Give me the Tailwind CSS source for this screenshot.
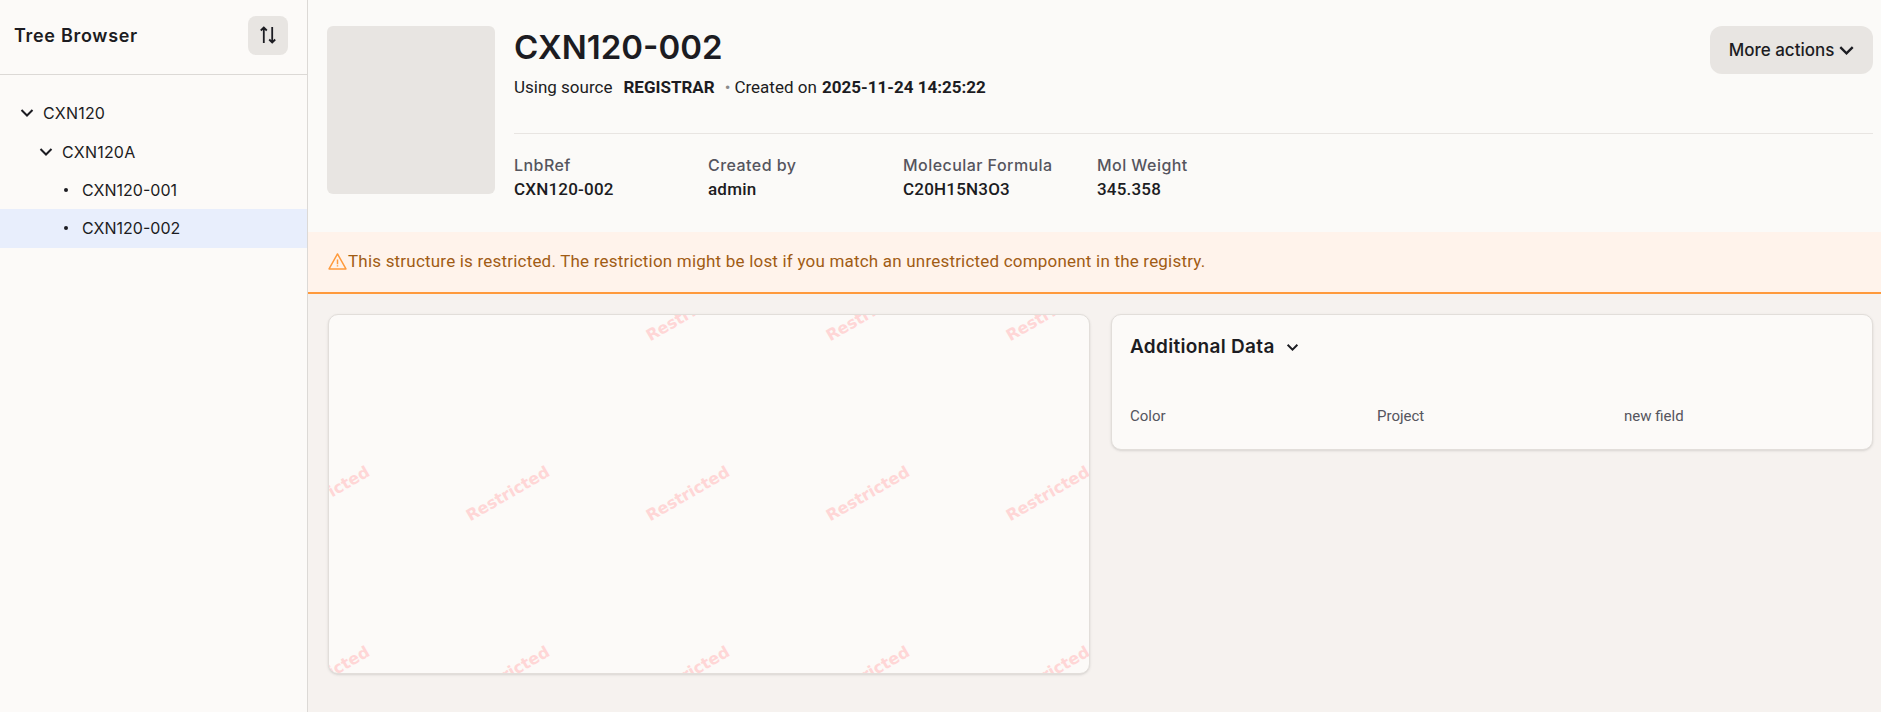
<!doctype html>
<html lang="en">
<head>
<meta charset="utf-8">
<title>CXN120-002</title>
<script src="https://cdn.jsdelivr.net/npm/@tailwindcss/browser@4"></script>
</head>
<body class="h-[712px] overflow-hidden bg-[#f6f2ef] font-['Roboto',sans-serif] text-[#1c1c22]">
<div class="flex h-[712px]">
  <aside class="flex w-[308px] shrink-0 flex-col border-r border-[#dcd9d6] bg-[#fcfaf8]">
    <div class="flex h-[75px] items-center justify-between border-b border-[#dcd9d6] pb-[4px] pl-[14px] pr-[19px]">
      <h2 class="font-['Inter',sans-serif] text-[18px] font-semibold tracking-[0.7px]">Tree Browser</h2>
      <button class="flex h-[39px] w-[40px] items-center justify-center rounded-lg bg-[#e8e5e2]">
        <svg class="h-[20px] w-[20px]" viewBox="0 0 20 20" fill="none" stroke="#1c1c22" stroke-width="1.8"><path d="M5.800 18V2.500M2.800 5.500l3-3 3 3M14.200 2v15.500M11.200 14.500l3 3 3-3"/></svg>
      </button>
    </div>
    <ul class="pt-[18px] font-['Inter',sans-serif] text-[16px]">
      <li class="flex h-[39px] items-center gap-[9px] pl-[20px]">
        <svg class="h-[14px] w-[14px]" viewBox="0 0 14 14" fill="none" stroke="#1c1c22" stroke-width="2"><path d="M1.500 4 7 9.500 12.500 4"/></svg>
        <span class="tracking-[0.2px]">CXN120</span>
      </li>
      <li class="flex h-[39px] items-center gap-[9px] pl-[39px]">
        <svg class="h-[14px] w-[14px]" viewBox="0 0 14 14" fill="none" stroke="#1c1c22" stroke-width="2"><path d="M1.500 4 7 9.500 12.500 4"/></svg>
        <span class="tracking-[0.2px]">CXN120A</span>
      </li>
      <li class="flex h-[38px] items-center gap-[14px] pl-[64px]">
        <span class="h-[4px] w-[4px] rounded-full bg-[#1c1c22]"></span>
        <span>CXN120-001</span>
      </li>
      <li class="flex h-[39px] items-center gap-[14px] bg-[#e8eefc] pb-[1px] pl-[64px]">
        <span class="h-[4px] w-[4px] rounded-full bg-[#1c1c22]"></span>
        <span>CXN120-002</span>
      </li>
    </ul>
  </aside>
  <main class="min-w-0 flex-1">
    <header class="flex h-[232px] gap-[19px] bg-[#fbfaf8] pl-[19px] pr-[8px] pt-[26px]">
      <div class="h-[168px] w-[168px] shrink-0 rounded-md bg-[#e8e5e2]"></div>
      <div class="min-w-0 flex-1">
        <div class="flex h-[108px] items-start justify-between border-b border-[#e8e5e2]">
          <div>
            <h1 class="font-['Inter',sans-serif] text-[33px] font-semibold leading-[42px]">CXN120-002</h1>
            <p class="mt-[7px] flex items-center text-[17px] leading-[24px]">
              <span>Using source</span>
              <b class="ml-[11px] font-bold">REGISTRAR</b>
              <span class="ml-[10px] mr-[4px] text-[#8a8a8a]">•</span>
              <span>Created on <b class="ml-[1px] font-bold">2025-11-24 14:25:22</b></span>
            </p>
          </div>
          <button class="flex h-[48px] w-[163px] items-center justify-center gap-[5px] rounded-xl bg-[#e8e5e2] pt-[1px] font-['Inter',sans-serif] text-[17px] font-medium">
            More actions
            <svg class="h-[15px] w-[15px]" viewBox="0 0 14 14" fill="none" stroke="#1c1c22" stroke-width="2.200"><path d="M1.200 3.800 7 9.600l5.800-5.800"/></svg>
          </button>
        </div>
        <dl class="mt-[19px] flex leading-[24px]">
          <div class="w-[194px]"><dt class="font-['Inter',sans-serif] text-[16px] font-medium tracking-[0.45px] text-[#55555e]">LnbRef</dt><dd class="text-[17px] font-medium tracking-[0.2px]">CXN120-002</dd></div>
          <div class="w-[195px]"><dt class="font-['Inter',sans-serif] text-[16px] font-medium tracking-[0.45px] text-[#55555e]">Created by</dt><dd class="text-[17px] font-medium tracking-[0.2px]">admin</dd></div>
          <div class="w-[194px]"><dt class="font-['Inter',sans-serif] text-[16px] font-medium tracking-[0.45px] text-[#55555e]">Molecular Formula</dt><dd class="text-[17px] font-medium tracking-[0.2px]">C20H15N3O3</dd></div>
          <div><dt class="font-['Inter',sans-serif] text-[16px] font-medium tracking-[0.45px] text-[#55555e]">Mol Weight</dt><dd class="text-[17px] font-medium tracking-[0.2px]">345.358</dd></div>
        </dl>
      </div>
    </header>
    <div class="flex h-[62px] items-center gap-[1px] border-b-2 border-[#ff9a3c] bg-[#fff3eb] pl-[20px] text-[17px] tracking-[0.2px] text-[#a15c14]">
      <svg class="-mt-[2px] h-[19px] w-[19px] shrink-0" viewBox="0 0 18 18" fill="none" stroke="#ff9a3c" stroke-width="1.400"><path d="M9 1.800 1 16h16z" stroke-linejoin="round"/><path d="M9 7v4.500M9 12.600v1.200"/></svg>
      <span>This structure is restricted. The restriction might be lost if you match an unrestricted component in the registry.</span>
    </div>
    <section class="flex gap-[21px] pl-[20px] pr-[8px] pt-[20px]">
      <div class="relative h-[360px] w-[762px] overflow-hidden rounded-[10px] border border-[#e2deda] bg-[#fcfaf8] shadow-sm">
        <span class="absolute left-[304px] top-[-10px] w-[110px] -rotate-30 text-center font-['DejaVu_Sans',sans-serif] text-[16px] font-bold leading-[18px] text-[#ffd6d6]">Restricted</span>
        <span class="absolute left-[484px] top-[-10px] w-[110px] -rotate-30 text-center font-['DejaVu_Sans',sans-serif] text-[16px] font-bold leading-[18px] text-[#ffd6d6]">Restricted</span>
        <span class="absolute left-[664px] top-[-10px] w-[110px] -rotate-30 text-center font-['DejaVu_Sans',sans-serif] text-[16px] font-bold leading-[18px] text-[#ffd6d6]">Restricted</span>
        <span class="absolute left-[-56px] top-[170px] w-[110px] -rotate-30 text-center font-['DejaVu_Sans',sans-serif] text-[16px] font-bold leading-[18px] text-[#ffd6d6]">Restricted</span>
        <span class="absolute left-[124px] top-[170px] w-[110px] -rotate-30 text-center font-['DejaVu_Sans',sans-serif] text-[16px] font-bold leading-[18px] text-[#ffd6d6]">Restricted</span>
        <span class="absolute left-[304px] top-[170px] w-[110px] -rotate-30 text-center font-['DejaVu_Sans',sans-serif] text-[16px] font-bold leading-[18px] text-[#ffd6d6]">Restricted</span>
        <span class="absolute left-[484px] top-[170px] w-[110px] -rotate-30 text-center font-['DejaVu_Sans',sans-serif] text-[16px] font-bold leading-[18px] text-[#ffd6d6]">Restricted</span>
        <span class="absolute left-[664px] top-[170px] w-[110px] -rotate-30 text-center font-['DejaVu_Sans',sans-serif] text-[16px] font-bold leading-[18px] text-[#ffd6d6]">Restricted</span>
        <span class="absolute left-[-56px] top-[350px] w-[110px] -rotate-30 text-center font-['DejaVu_Sans',sans-serif] text-[16px] font-bold leading-[18px] text-[#ffd6d6]">Restricted</span>
        <span class="absolute left-[124px] top-[350px] w-[110px] -rotate-30 text-center font-['DejaVu_Sans',sans-serif] text-[16px] font-bold leading-[18px] text-[#ffd6d6]">Restricted</span>
        <span class="absolute left-[304px] top-[350px] w-[110px] -rotate-30 text-center font-['DejaVu_Sans',sans-serif] text-[16px] font-bold leading-[18px] text-[#ffd6d6]">Restricted</span>
        <span class="absolute left-[484px] top-[350px] w-[110px] -rotate-30 text-center font-['DejaVu_Sans',sans-serif] text-[16px] font-bold leading-[18px] text-[#ffd6d6]">Restricted</span>
        <span class="absolute left-[664px] top-[350px] w-[110px] -rotate-30 text-center font-['DejaVu_Sans',sans-serif] text-[16px] font-bold leading-[18px] text-[#ffd6d6]">Restricted</span>
      </div>
      <div class="h-[136px] w-[762px] rounded-[10px] border border-[#e2deda] bg-[#fcfaf8] px-[18px] shadow-sm">
        <div class="flex h-[64px] items-center gap-[11px]">
          <h3 class="font-['Inter',sans-serif] text-[19px] font-semibold tracking-[0.3px]">Additional Data</h3>
          <svg class="h-[13px] w-[13px]" viewBox="0 0 12 12" fill="none" stroke="#1c1c22" stroke-width="1.800"><path d="M1.500 3.500 6 8l4.500-4.500"/></svg>
        </div>
        <div class="mt-[27px] grid grid-cols-[247px_247px_1fr] text-[15px] leading-[20px] text-[#55555e]">
          <span>Color</span><span>Project</span><span>new field</span>
        </div>
      </div>
    </section>
  </main>
</div>
</body>
</html>
